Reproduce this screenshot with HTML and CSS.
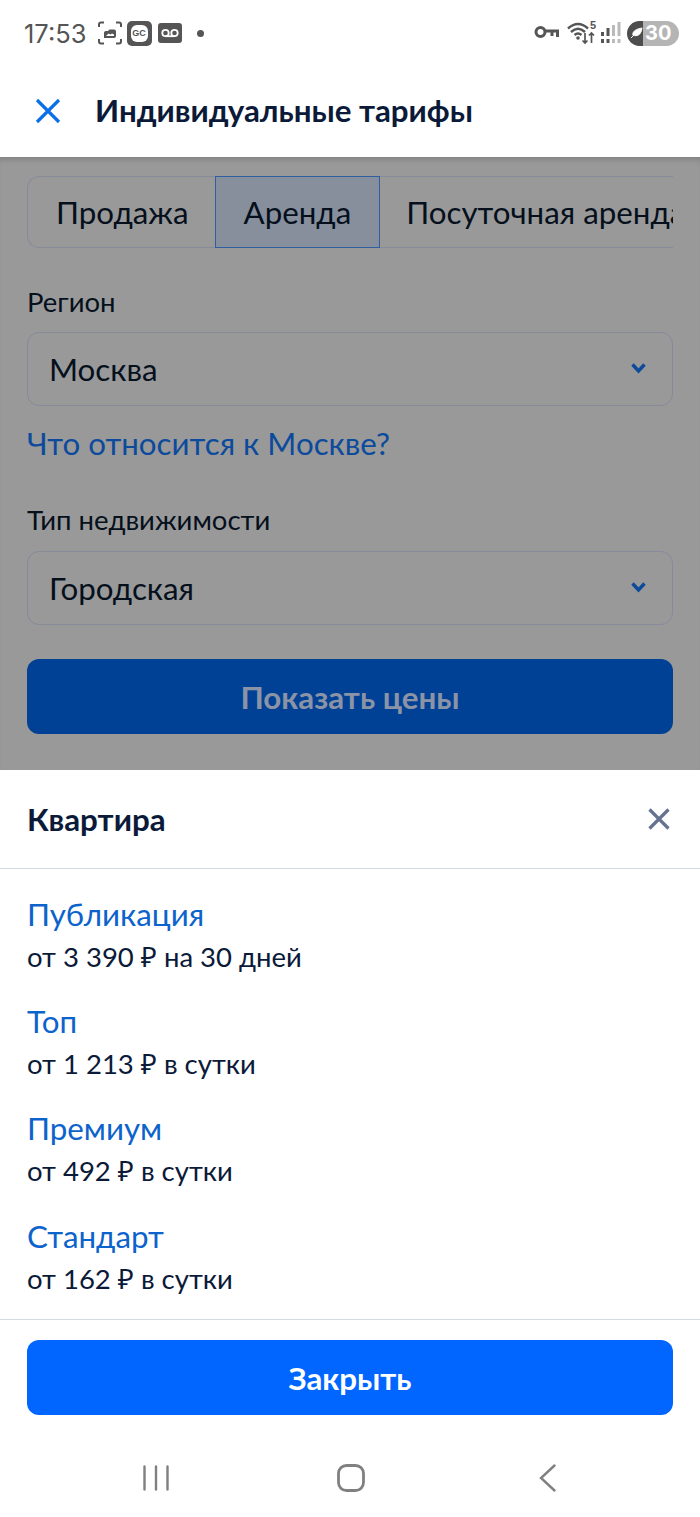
FILE: index.html
```html
<!DOCTYPE html>
<html lang="ru">
<head>
  <meta charset="UTF-8">
  <meta name="viewport" content="width=device-width, initial-scale=1.0">
  <title>Индивидуальные тарифы</title>
  <link rel="stylesheet" href="styles.css">
</head>
<body>
  <div class="statusbar">
    <span class="clock">17:53</span>
    <svg class="st-icon" width="24" height="24" viewBox="0 0 24 24" fill="none" stroke="#555" stroke-width="2">
      <path d="M1 6V3.500Q1 1.500 3 1.500H6M18 1.500H21Q23 1.500 23 3.500V6M1 18V20.500Q1 22.500 3 22.500H6M18 22.500H21Q23 22.500 23 20.500V18"/>
      <path d="M6 17V11.500Q6 10 8 10H10L11.500 8.500H16Q18 8.500 18 10.500V15Q18 17 16 17Z" fill="#555" stroke="none"/>
      <path d="M8 15H16V13.500L14 12.500L12.500 13.500L10.500 12.500Z" fill="#fff" stroke="none"/>
    </svg>
    <span class="gc-badge">GC</span>
    <svg class="st-icon" width="24" height="20" viewBox="0 0 24 20">
      <rect width="24" height="20" rx="3" fill="#555"/>
      <circle cx="7.500" cy="10" r="3.200" fill="none" stroke="#fff" stroke-width="1.800"/>
      <circle cx="16.500" cy="10" r="3.200" fill="none" stroke="#fff" stroke-width="1.800"/>
      <path d="M7.500 13.200H16.500" stroke="#fff" stroke-width="1.800"/>
    </svg>
    <span class="dot"></span>
    <span class="status-right">
      <svg width="25" height="16" viewBox="0 0 25 16" fill="none" stroke="#555" stroke-width="3">
        <circle cx="6.500" cy="7" r="4.500"/>
        <path d="M11 6H23.500V12M18 6V11"/>
      </svg>
      <svg class="wifi" width="29" height="24" viewBox="0 0 29 24" fill="none" stroke="#555" stroke-width="2.400">
        <path d="M1 7.500Q11 -1.500 21 7.500M4 11Q11 4.500 18 11M7.500 14Q11 11 14.500 14"/>
        <circle cx="11" cy="17" r="1.800" fill="#555" stroke="none"/>
        <path d="M18 12V22M15.500 19.500L18 22L20.500 19.500M24.500 22V12M22 14.500L24.500 12L27 14.500" stroke-width="1.700"/>
      </svg>
      <span class="wifi-num">5</span>
      <svg width="20" height="24" viewBox="0 0 20 24" fill="#555">
        <rect x="0" y="11" width="3" height="4"/><rect x="0" y="18" width="3" height="4"/>
        <rect x="5.500" y="7" width="3" height="8"/><rect x="5.500" y="18" width="3" height="4"/>
        <rect x="11" y="4" width="3" height="11" fill="#bbb"/><rect x="11" y="18" width="3" height="4" fill="#bbb"/>
        <rect x="16.500" y="1" width="3" height="14" fill="#bbb"/><rect x="16.500" y="18" width="3" height="4" fill="#bbb"/>
      </svg>
      <span class="battery">
        <span class="battery-used">
          <svg width="13" height="12" viewBox="0 0 14 13"><path d="M1 12L5 8M3 9Q2 3 13 1Q12 10 5 9.500" fill="#fff" stroke="#fff" stroke-width="1"/></svg>
        </span>
        <span class="battery-level">30</span>
      </span>
    </span>
  </div>

  <header class="topbar">
    <svg class="topbar-close" width="26" height="26" viewBox="0 0 26 26" fill="none" stroke="#0d6fe8" stroke-width="3.200">
      <path d="M2 2L24 24M24 2L2 24"/>
    </svg>
    <h1>Индивидуальные тарифы</h1>
  </header>

  <main class="backdrop">
    <div class="tabs">
      <div class="tab tab-first">Продажа</div>
      <div class="tab tab-active">Аренда</div>
      <div class="tab tab-last">Посуточная аренда</div>
    </div>

    <label class="field-label">Регион</label>
    <div class="select">
      <span>Москва</span>
      <svg width="15" height="11" viewBox="0 0 15 11" fill="none" stroke="#0c4a9c" stroke-width="3.400"><path d="M1.500 1.500L7.500 8L13.500 1.500"/></svg>
    </div>
    <a class="region-link">Что относится к Москве?</a>

    <label class="field-label field-label-type">Тип недвижимости</label>
    <div class="select select-type">
      <span>Городская</span>
      <svg width="15" height="11" viewBox="0 0 15 11" fill="none" stroke="#0c4a9c" stroke-width="3.400"><path d="M1.500 1.500L7.500 8L13.500 1.500"/></svg>
    </div>

    <button class="btn btn-dim">Показать цены</button>
  </main>

  <section class="sheet">
    <div class="sheet-head">
      <h2>Квартира</h2>
      <svg width="22" height="22" viewBox="0 0 22 22" fill="none" stroke="#66738f" stroke-width="3.200"><path d="M1.500 1.500L20.500 20.500M20.500 1.500L1.500 20.500"/></svg>
    </div>
    <ul class="prices">
      <li><a>Публикация</a><p>от 3 390 ₽ на 30 дней</p></li>
      <li><a>Топ</a><p>от 1 213 ₽ в сутки</p></li>
      <li><a>Премиум</a><p>от 492 ₽ в сутки</p></li>
      <li><a>Стандарт</a><p>от 162 ₽ в сутки</p></li>
    </ul>
    <div class="sheet-foot">
      <button class="btn btn-main">Закрыть</button>
    </div>
  </section>

  <nav class="navbar">
    <svg width="28" height="26" viewBox="0 0 28 26" stroke="#808080" stroke-width="2.400" stroke-linecap="round"><path d="M2.500 1.500V24.500M14 1.500V24.500M25.500 1.500V24.500"/></svg>
    <svg class="nav-home" width="28" height="28" viewBox="0 0 28 28" fill="none" stroke="#808080" stroke-width="2.800"><rect x="1.500" y="1.500" width="25" height="25" rx="8"/></svg>
    <svg class="nav-back" width="18" height="28" viewBox="0 0 18 28" fill="none" stroke="#808080" stroke-width="2.400" stroke-linecap="round"><path d="M15.500 1.500L2 14L15.500 26.500"/></svg>
  </nav>
</body>
</html>
```

FILE: styles.css
```css
* { box-sizing: border-box; }
html, body { margin: 0; padding: 0; }
body { width: 700px; height: 1517px; overflow: hidden; background: #fff; font-family: Lato, "Noto Sans", sans-serif; color: #0b1a38; }
h1, h2, p, ul { margin: 0; padding: 0; }
li { list-style: none; }
button { font-family: inherit; border: 0; display: block; width: 100%; }

/* status bar */
.statusbar { height: 66px; display: flex; align-items: center; padding: 0 21px 0 24px; }
.clock { font-family: Inter, sans-serif; font-size: 25.500px; color: #555; margin-right: 11px; }
.st-icon { margin-right: 5px; flex: none; }
.gc-badge { width: 25px; height: 25px; margin-right: 6px; background: #555; border-radius: 5px; display: flex; align-items: center; justify-content: center; color: #555; font: 800 9px "Liberation Sans", sans-serif; position: relative; z-index: 0; }
.gc-badge::before { content: ""; position: absolute; inset: 4px; border-radius: 6px; background: #fff; z-index: -1; }
.dot { width: 7px; height: 7px; margin-left: 10px; border-radius: 50%; background: #555; }
.status-right { margin-left: auto; display: flex; align-items: center; }
.wifi { margin-left: 8px; }
.wifi-num { font: 700 11px "Liberation Sans", sans-serif; color: #555; margin-left: -6px; margin-top: -17px; width: 11px; }
.battery { display: flex; width: 52px; height: 25px; margin-left: 6px; border-radius: 13px; overflow: hidden; }
.battery-used { width: 16px; background: #4d4d4d; display: flex; align-items: center; justify-content: flex-end; flex: none; }
.battery-level { flex: 1; background: #b5b5b5; color: #fff; font: 700 20px Inter, sans-serif; display: flex; align-items: center; padding-left: 2px; }

/* top bar */
.topbar { height: 91px; display: flex; align-items: center; padding: 0 0 4px 35px; background: #fff; }
.topbar-close { flex: none; margin-right: 34px; margin-top: 2px; }
.topbar h1 { font-size: 31.300px; font-weight: 700; white-space: nowrap; }

/* dimmed page behind the sheet */
.backdrop { height: 613px; background: #999; padding: 19px 27px 0 27px; color: #05101c; box-shadow: inset 0 6px 6px -4px rgba(0,0,0,0.18); }
.tabs { display: flex; height: 72px; border-radius: 12px 0 0 12px; overflow: hidden; font-size: 31.300px; white-space: nowrap; }
.tab { padding: 0 28px; display: flex; align-items: center; flex: none; border: solid #868a99; border-width: 1px 0; }
.tab-first { padding-right: 26px; border-left-width: 1px; border-radius: 12px 0 0 12px; }
.tab-active { background: #878f9c; border: 1px solid #2f5f9f; }
.tab-last { padding-left: 26px; }
.field-label { display: block; font-size: 27.500px; line-height: 32px; margin-top: 38px; }
.field-label-type { margin-top: 42px; }
.select { height: 74px; margin-top: 14px; padding: 0 26px 1px 21px; border: 1px solid #868a99; border-radius: 12px; display: flex; align-items: center; justify-content: space-between; font-size: 31.300px; }
.select-type { margin-top: 15px; }
.region-link { display: block; font-size: 31.300px; line-height: 38px; margin-top: 18px; color: #0c4a9c; }
.btn { height: 75px; border-radius: 12px; font-size: 31.300px; font-weight: 700; }
.btn-dim { margin-top: 34px; background: #004196; color: #8a94a6; }
.btn-main { background: #0066ff; color: #fff; }

/* bottom sheet */
.sheet { background: #fff; }
.sheet-head { height: 99px; display: flex; align-items: center; justify-content: space-between; padding: 0 30px 0 27px; border-bottom: 1px solid #d5dbe3; }
.sheet-head h2 { font-size: 31.300px; font-weight: 700; }
.prices { height: 451px; padding: 24.800px 27px 0; border-bottom: 1px solid #d5dbe3; }
.prices li { height: 107.300px; }
.prices a { display: block; font-size: 31.300px; line-height: 40px; color: #0d63cc; }
.prices p { font-size: 27.500px; line-height: 46px; }
.sheet-foot { padding: 20px 27px 0; height: 107px; }

/* android nav */
.navbar { display: flex; align-items: center; padding: 37px 0 0 142px; }
.nav-home { margin-left: 167px; }
.nav-back { margin-left: 174px; }
```
